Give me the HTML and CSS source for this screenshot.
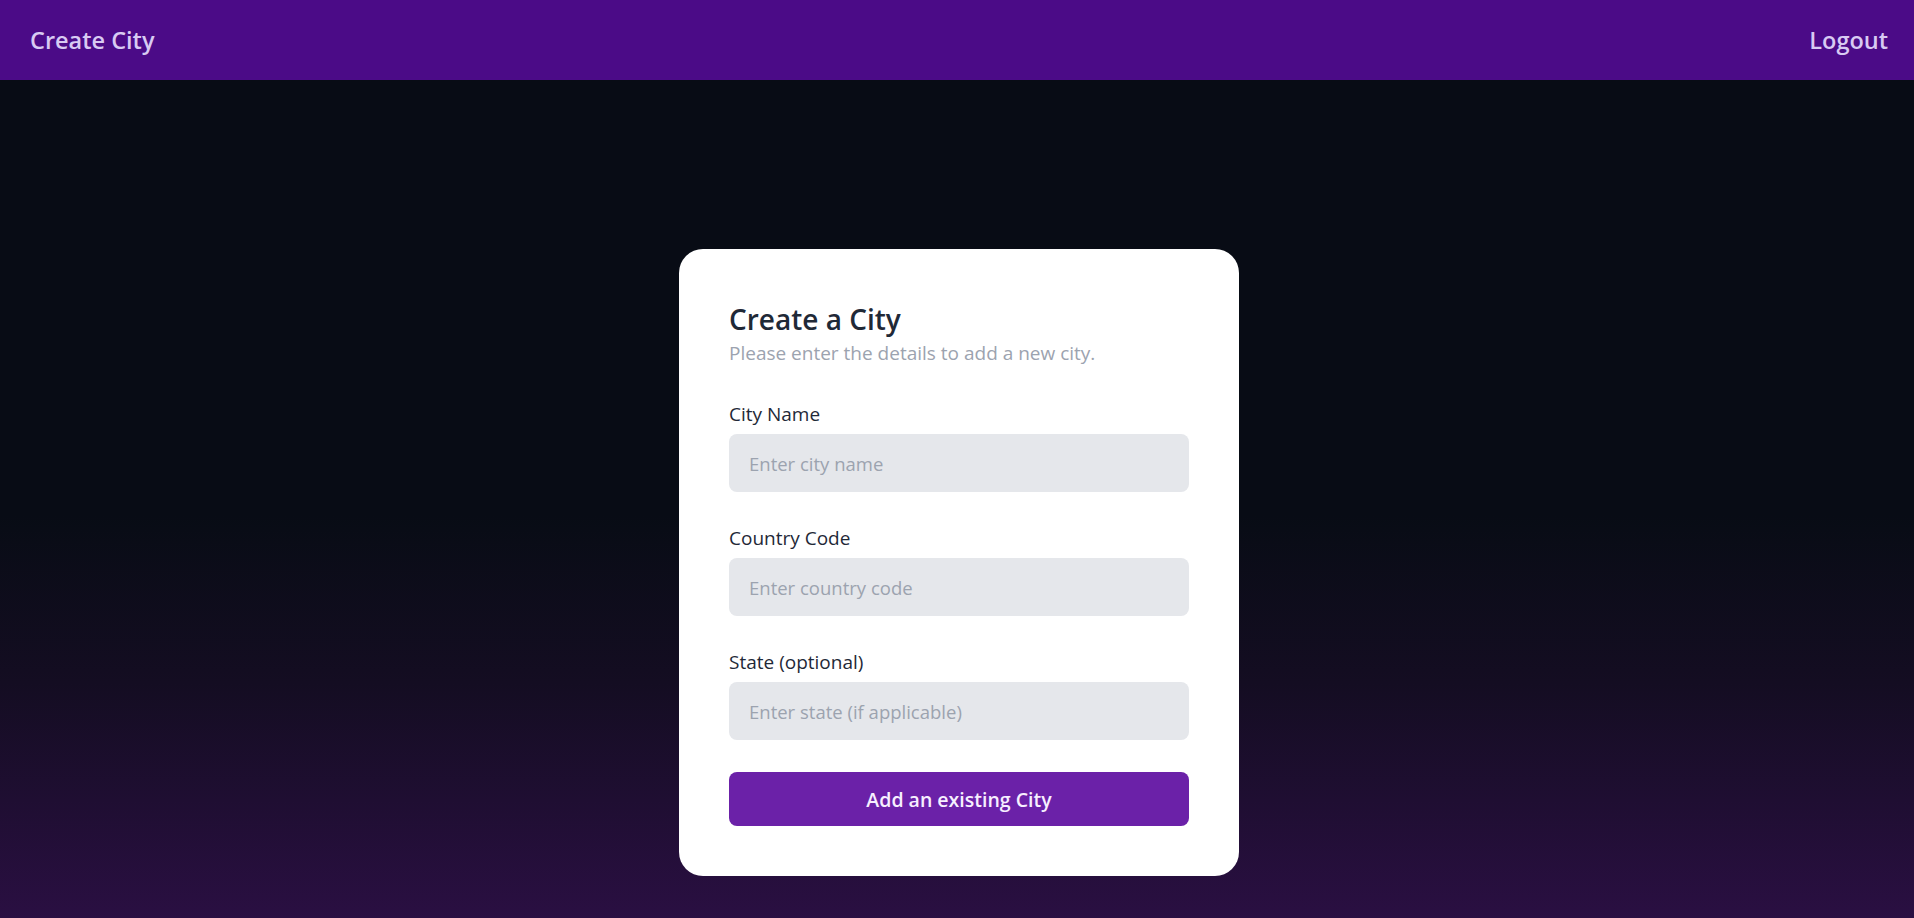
FILE: index.html
```html
<!DOCTYPE html>
<html lang="en">
<head>
<meta charset="utf-8">
<title>Create City</title>
<link rel="stylesheet" href="styles.css">
</head>
<body>
<header class="topbar">
  <a class="brand" href="#">Create City</a>
  <a class="logout" href="#">Logout</a>
</header>
<main class="page">
  <section class="card">
    <h1 class="card-title">Create a City</h1>
    <p class="card-subtitle">Please enter the details to add a new city.</p>
    <form class="form">
      <div class="field">
        <label class="field-label" for="city">City Name</label>
        <input class="field-input" id="city" type="text" placeholder="Enter city name">
      </div>
      <div class="field">
        <label class="field-label" for="country">Country Code</label>
        <input class="field-input" id="country" type="text" placeholder="Enter country code">
      </div>
      <div class="field">
        <label class="field-label" for="state">State (optional)</label>
        <input class="field-input" id="state" type="text" placeholder="Enter state (if applicable)">
      </div>
      <button class="submit" type="button">Add an existing City</button>
    </form>
  </section>
</main>
</body>
</html>
```
FILE: styles.css
```css
* { box-sizing: border-box; }
html, body { margin: 0; padding: 0; }
body {
  font-family: "Open Sans", "Noto Sans", "Liberation Sans", sans-serif;
  background: #080c15;
  min-height: 918px;
}
.topbar {
  height: 80px;
  background: #4b0b87;
  display: flex;
  align-items: center;
  justify-content: space-between;
  padding: 0 26px 0 30px;
}
.brand, .logout {
  color: #d8caf3;
  text-decoration: none;
  font-size: 23.5px;
  font-weight: 600;
}
.page {
  min-height: 838px;
  background: linear-gradient(to bottom, #080c15 0%, #080c15 52%, #140d22 72%, #2a0f42 100%);
  display: flex;
  justify-content: center;
  align-items: flex-start;
  padding: 169px 0 0 4px;
}
.card {
  width: 560px;
  background: #ffffff;
  border-radius: 24px;
  padding: 50px;
}
.card-title {
  margin: 0;
  font-size: 28px;
  line-height: 40px;
  font-weight: 600;
  color: #1f2937;
}
.card-subtitle {
  margin: 0;
  font-size: 19px;
  line-height: 28px;
  color: #9ca3af;
}
.form {
  margin-top: 33px;
  display: flex;
  flex-direction: column;
  gap: 32px;
}
.field {
  display: flex;
  flex-direction: column;
  gap: 6px;
}
.field-label {
  font-size: 19px;
  line-height: 28px;
  color: #1f2937;
}
.field-input {
  height: 58px;
  border: none;
  border-radius: 8px;
  background: #e5e7eb;
  padding: 0 20px;
  font-family: inherit;
  font-size: 18.5px;
  color: #1f2937;
  outline: none;
}
.field-input::placeholder { color: #9ca3af; }
.submit {
  height: 54px;
  border: none;
  border-radius: 8px;
  background: #6b21a8;
  color: #f7efff;
  font-family: inherit;
  font-size: 19.5px;
  font-weight: 600;
  cursor: pointer;
}
```
